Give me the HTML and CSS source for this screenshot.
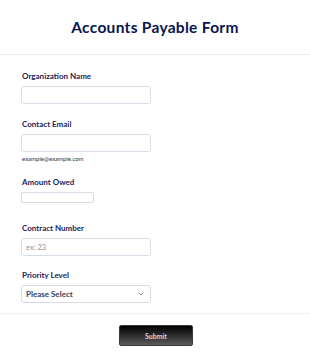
FILE: index.html
```html
<!DOCTYPE html>
<html lang="en">
<head>
<meta charset="utf-8">
<link rel="stylesheet" href="styles.css">
</head>
<body>
<div class="page">
  <header class="header">
    <h1 class="title">Accounts Payable Form</h1>
  </header>
  <form class="form">
    <div class="field field-first">
      <label class="label">Organization Name</label>
      <input class="input" type="text">
    </div>
    <div class="field">
      <label class="label">Contact Email</label>
      <input class="input" type="text">
      <span class="hint">example@example.com</span>
    </div>
    <div class="field field-amount">
      <label class="label">Amount Owed</label>
      <input class="input input-small" type="text">
    </div>
    <div class="field">
      <label class="label">Contract Number</label>
      <input class="input" type="text" placeholder="ex: 23">
    </div>
    <div class="field">
      <label class="label">Priority Level</label>
      <div class="select">
        <span class="select-text">Please Select</span>
        <svg class="chevron" width="6" height="4" viewBox="0 0 6 4"><path d="M0.8 0.8 L3 3 L5.2 0.8" fill="none" stroke="#8a8ca3" stroke-width="1"/></svg>
      </div>
    </div>
  </form>
  <div class="footer">
    <button class="submit" type="button">Submit</button>
  </div>
</div>
</body>
</html>
```
FILE: styles.css
```css
* { box-sizing: border-box; }
html, body { margin: 0; padding: 0; background: #ffffff; }
body { font-family: "Lato", "Liberation Sans", sans-serif; }
.page { width: 310px; }
.header {
  height: 55px;
  border-bottom: 1px solid #ececf2;
  padding-top: 16px;
  text-align: center;
}
.title {
  margin: 0;
  font-size: 15.5px;
  line-height: 22px;
  font-weight: 700;
  color: #0a1551;
  letter-spacing: 0.3px;
}
.form {
  padding: 15px 0 0 21px;
  display: flex;
  flex-direction: column;
}
.field {
  display: flex;
  flex-direction: column;
  align-items: flex-start;
  margin-bottom: 13px;
}
.field-first { margin-bottom: 14px; }
.field-amount { margin-bottom: 19px; }
.label {
  font-size: 8px;
  line-height: 12px;
  font-weight: 700;
  color: #1c2257;
  margin: 0 0 4px 1px;
}
.input {
  width: 130px;
  height: 18px;
  border: 1px solid #d9dbe7;
  border-radius: 3px;
  padding: 0 4px;
  font-family: inherit;
  font-size: 7.5px;
  color: #2c3345;
  background: #fff;
  outline: none;
}
.input::placeholder { color: #8e909f; opacity: 1; }
.input-small { width: 73px; height: 11px; border-radius: 2px; }
.hint {
  font-size: 6px;
  line-height: 8px;
  color: #2c3345;
  margin: 3px 0 0 1px;
}
.select {
  width: 130px;
  height: 18px;
  border: 1px solid #d9dbe7;
  border-radius: 3px;
  display: flex;
  align-items: center;
  justify-content: space-between;
  padding: 0 6px 0 4px;
}
.select-text {
  font-size: 8px;
  font-weight: 700;
  color: #3b3e58;
}
.footer {
  border-top: 1px solid #f1f1f5;
  margin-top: -3px;
  padding-top: 11px;
  display: flex;
  justify-content: center;
}
.submit {
  width: 74px;
  height: 21px;
  margin-left: 2px;
  border: 1px solid #3a3a3a;
  border-radius: 2px;
  background: linear-gradient(#000000, #5a5a5a);
  color: #d4d5de;
  font-family: inherit;
  font-size: 7px;
  font-weight: 700;
  padding: 0;
}
```
